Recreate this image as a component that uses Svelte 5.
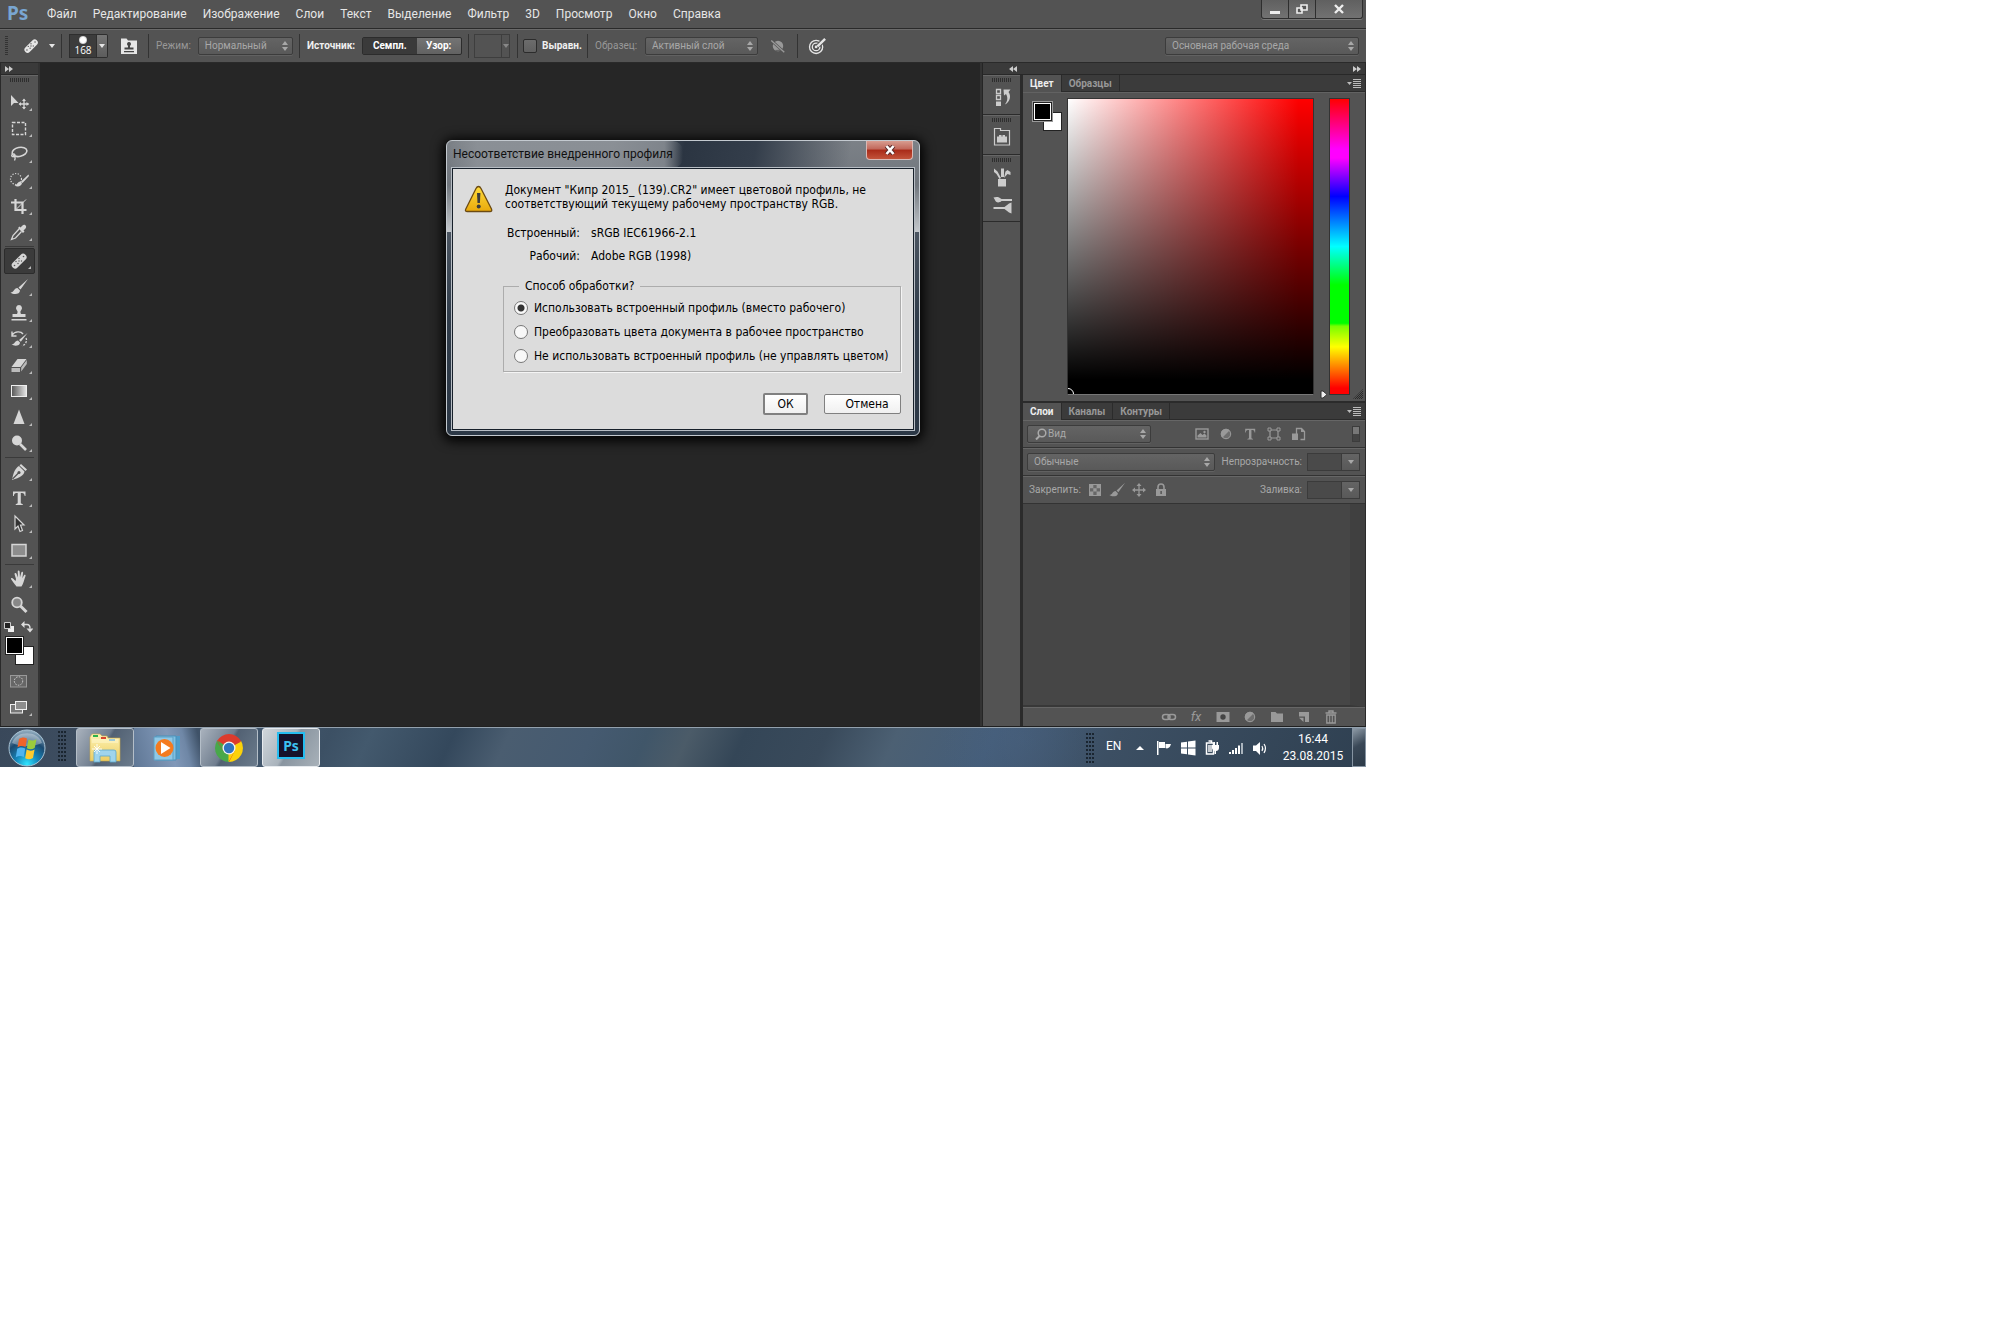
<script lang="ts">
  let profile = $state("embedded");
  let aligned = $state(false);

  const menus = ["Файл", "Редактирование", "Изображение", "Слои", "Текст", "Выделение", "Фильтр", "3D", "Просмотр", "Окно", "Справка"];

  const policies = [
    { value: "embedded", label: "Использовать встроенный профиль (вместо рабочего)" },
    { value: "convert", label: "Преобразовать цвета документа в рабочее пространство" },
    { value: "discard", label: "Не использовать встроенный профиль (не управлять цветом)" },
  ];

  // 20x20 glyphs, painted with currentColor
  const icons: Record<string, string> = {
    move: `<path d="M2 3v11l3-3h4.500z" fill="currentColor"/><path d="M15 7.500v9M10.500 12h9" stroke="currentColor" stroke-width="1.300"/><path d="M15 6.500l2 2.500h-4zM15 17.500l2-2.500h-4zM9.500 12l2.500-2v4zM20 12l-2.500-2v4z" fill="currentColor"/>`,
    marquee: `<rect x="3.500" y="4.500" width="13" height="12" fill="none" stroke="currentColor" stroke-width="1.400" stroke-dasharray="3 1.500"/>`,
    lasso: `<ellipse cx="10.500" cy="8" rx="7.500" ry="4.500" fill="none" stroke="currentColor" stroke-width="1.600" transform="rotate(-12 10 8)"/><path d="M4 10c-2.500 1-1 3.500 1 2.500s.5-3-1-2.500M5.500 12.500c1 1 .5 3 0 4" fill="none" stroke="currentColor" stroke-width="1.300"/>`,
    quick: `<circle cx="7" cy="9" r="5.500" fill="none" stroke="currentColor" stroke-width="1.200" stroke-dasharray="1.200 1.500"/><path d="M19.500 4.500l-7.500 7 1.500 1.500 6.500-7zM11.500 11.500c-3 0-3 3.500-6 4 3 2 7 1 7.500-2.500z" fill="currentColor"/>`,
    crop: `<path d="M6.500 3v11h11M2 6.500h11.500V18" fill="none" stroke="currentColor" stroke-width="2.200"/><path d="M7 13.500L17 3.500" stroke="currentColor" stroke-width="1"/>`,
    dropper: `<path d="M13.500 3.500c2-2 5 1 3 3l-2 2 1 1-1.500 1.500-5-5L10.500 4.500l1 1z" fill="currentColor"/><path d="M10 7l-6 6.500-1.500 4 4-1.500 6-6.500" fill="none" stroke="currentColor" stroke-width="1.300"/>`,
    heal: `<rect x="1" y="6.800" width="18" height="6.800" rx="3.300" fill="currentColor" transform="rotate(-45 10 10)"/><g fill="#555"><circle cx="7" cy="10.500" r=".7"/><circle cx="9" cy="12.500" r=".7"/><circle cx="10" cy="10" r=".7"/><circle cx="10" cy="7.500" r=".7"/><circle cx="12.500" cy="10" r=".7"/><circle cx="14.500" cy="5.500" r=".8"/><circle cx="5.500" cy="14.500" r=".8"/></g>`,
    brush: `<path d="M19 2L9.500 10.500l2 2zM8.500 11c-4 .5-3 4-7 4.500 3 2.500 9.500 2 9.500-2z" fill="currentColor"/>`,
    stamp: `<path d="M10 2a3.200 3.200 0 0 0-2 5.500c1 1 .5 2.500 0 3.500H3.500v3h13v-3H12c-.5-1-1-2.500 0-3.500A3.200 3.200 0 0 0 10 2zM2.500 16h15v1.500h-15z" fill="currentColor"/>`,
    history: `<path d="M3 6c3-4 9-4 11-1M3 2.500V7h4.500" fill="none" stroke="currentColor" stroke-width="1.400"/><path d="M18.500 4L10 11l1.800 1.800zM9 11.500c-3.500.5-3 3.500-6.500 4 3 2 8.500 1.500 8.500-2z" fill="currentColor"/><path d="M17 9c1.500 3-.5 7-4 8" fill="none" stroke="currentColor" stroke-width="1.300" stroke-dasharray="2 1.300"/>`,
    eraser: `<path d="M8.500 4h9l-6 8h-9z" fill="currentColor"/><path d="M2.500 13h8.500v4H2.500zM12.200 12.600l5.600-7.600v4l-5.600 7.600z" fill="currentColor" opacity=".8"/>`,
    gradient: `<rect x="2.500" y="4.500" width="15" height="11" fill="url(#g-grey)" stroke="#eee"/>`,
    sharpen: `<path d="M10 2.500L15.500 17h-11z" fill="currentColor"/>`,
    dodge: `<circle cx="8" cy="7.500" r="5" fill="currentColor"/><path d="M11 11l6 6" stroke="currentColor" stroke-width="2.600"/>`,
    pen: `<path d="M12 2l6 5.500-1.500 1.500-6-5.500zM10 4l5.500 5.500c-1 4-4 6-12.500 8.500C4.500 10 6.500 6 10 4z" fill="currentColor"/><path d="M3.500 17l6-6" stroke="#535353" stroke-width="1.200"/><circle cx="10" cy="10.500" r="1.500" fill="#535353"/>`,
    type: `<path d="M4 3.500h12.500V8h-.8c-.3-2-1-3-2.700-3h-1.200v10.300l2 .9v.8H6.700v-.8l2-.9V5H7.500C5.800 5 5.100 6 4.800 8H4z" fill="currentColor"/>`,
    path: `<path d="M6 2v13l3-3 2 5.500 2.500-1L11.500 11H15z" fill="#333" stroke="currentColor" stroke-width="1.200"/>`,
    rect: `<rect x="3" y="4.500" width="14" height="11.500" fill="#8d8d8d" stroke="currentColor" stroke-width="1.500"/>`,
    hand: `<path d="M7 10L5.500 5c0-1.200 1.500-1.500 2-.3L9 8.500l-.3-6c.1-1.300 1.700-1.300 1.900 0l.4 5.800 1.300-4.800c.4-1.200 1.900-.8 1.800.4l-.8 5.300 1.700-3c.7-1 1.900-.3 1.500.8-1.500 4-2 8-4 10.500H7.500C5.500 15 3.500 12.500 2 10c-.3-1.200 1.300-1.500 2-.6L6.500 12z" fill="currentColor"/>`,
    zoom: `<circle cx="8" cy="7.500" r="4.800" fill="#888" stroke="currentColor" stroke-width="1.800"/><path d="M11.500 11l6 6" stroke="currentColor" stroke-width="3"/>`,
    mask: `<rect x="1.500" y="4.500" width="16" height="11.500" fill="#666" stroke="#999"/><circle cx="9.500" cy="10" r="4.200" fill="none" stroke="currentColor" stroke-dasharray="1.500 1.300"/>`,
    screens: `<rect x="1.500" y="7.500" width="12" height="8.500" fill="#777" stroke="#eee"/><rect x="6.500" y="4.500" width="11" height="8" fill="#8c8c8c" stroke="#eee"/>`,
    actions: `<path d="M4.500 2.500h4v4h-4zM4.500 8.500h4v4h-4z" fill="none" stroke="currentColor" stroke-width="1.300"/><path d="M4 14.500h5V19H4zM11.500 2.500h7l-2 2.500c3 4 1.500 10-3.500 12.500 2-3 3.500-6 1-10.500L12 8.500z" fill="currentColor"/>`,
    library: `<path d="M2.500 18V1.500h6v2h9V18z" fill="none" stroke="currentColor" stroke-width="1.200"/><path d="M5 15.500V9.500h2v-1.500h2.500v1.500h1V8H13v1.500h2v6z" fill="currentColor"/>`,
    presets: `<path d="M6 12h8v7.500H6zM7.500 12L4.500 7 2 5V1.500l3.500 3L9 11zM9 10V1.500h3V10zM12 11l1.500-6.500 2-1.500L18.500 5v3L15.500 7z" fill="currentColor"/>`,
    brushes: `<path d="M1.500 2.500C4 1.500 7 1.500 9.500 4H20v2H9.500C7 8.500 3.500 7.500 3 5zM1.500 12h11L17 8.500l2.500-1v11L17 17.500l-4.500-3.500h-11z" fill="currentColor"/>`,
    source: `<path d="M2 18V2.500h5.500l1.500 2h9V18z" fill="currentColor"/><path d="M10 6a2 2 0 0 0-1.300 3.500c.5.700.3 1.500.2 2H5.500v2h9v-2h-3.400c-.1-.5-.3-1.300.2-2A2 2 0 0 0 10 6zM5 15h10v1.200H5z" fill="#444"/>`,
    noadjust: `<circle cx="10" cy="10" r="5.800" fill="currentColor"/><path d="M6 14.500A6 6 0 0 0 14.500 14z" fill="#666"/><path d="M2.500 4L17 17" stroke="#535353" stroke-width="3"/><path d="M2.500 4L17 17" stroke="currentColor" stroke-width="1.500"/>`,
    target: `<circle cx="9" cy="11" r="7.300" fill="none" stroke="currentColor" stroke-width="1.500"/><circle cx="9" cy="11" r="4.200" fill="none" stroke="currentColor" stroke-width="1.500"/><circle cx="9" cy="11" r="1.500" fill="currentColor"/><path d="M19.500 1.500l-8 8" stroke="#535353" stroke-width="5"/><path d="M19 2l-8.500 8.500" stroke="currentColor" stroke-width="2.600"/>`,
    picture: `<rect x="4" y="5" width="12" height="10" fill="none" stroke="currentColor" stroke-width="1.400"/><path d="M5.500 13.500v-2l3-2.500 2 2 2-1.500 2 2v2z" fill="currentColor"/><circle cx="12.500" cy="8" r="1.200" fill="currentColor"/>`,
    adjust: `<circle cx="10" cy="10" r="5.200" fill="#6e6e6e"/><path d="M13.700 6.300A5.200 5.200 0 1 0 6.300 13.700z" fill="currentColor"/><circle cx="10" cy="10" r="4.700" fill="none" stroke="currentColor" stroke-width="1"/>`,
    shape: `<path d="M6 6h8v8H6z" fill="none" stroke="currentColor" stroke-width="1.200"/><path d="M4 4h3v3H4zM13 4h3v3h-3zM4 13h3v3H4zM13 13h3v3h-3z" fill="#535353" stroke="currentColor"/>`,
    smart: `<path d="M8.500 13.500V4.500h5l3 3v8h-4" fill="none" stroke="currentColor" stroke-width="1.300"/><path d="M4 9.500h6v6.500H4zM13 4v4h4z" fill="currentColor"/>`,
    checker: `<rect x="4.500" y="4.500" width="11" height="11" fill="#666" stroke="currentColor"/><path d="M5 5h3.300v3.300H5zM11.600 5H15v3.300h-3.400zM8.300 8.300h3.300v3.300H8.300zM5 11.600h3.300V15H5zM11.600 11.600H15V15h-3.400z" fill="currentColor"/>`,
    cross: `<path d="M10 5v10M5 10h10" stroke="currentColor" stroke-width="1.300"/><path d="M10 3l2.500 3h-5zM10 17l2.500-3h-5zM3 10l3-2.500v5zM17 10l-3-2.500v5z" fill="currentColor"/>`,
    lock: `<path d="M7 9V7a3 3 0 0 1 6 0v2" fill="none" stroke="currentColor" stroke-width="1.600"/><path d="M5 9h10v7H5z" fill="currentColor"/><path d="M9.500 11h1.200v3H9.500z" fill="#444"/>`,
    link: `<rect x="3.500" y="7.500" width="7.500" height="5" rx="2.500" fill="none" stroke="currentColor" stroke-width="1.500"/><rect x="9" y="7.500" width="7.500" height="5" rx="2.500" fill="none" stroke="currentColor" stroke-width="1.500"/>`,
    addmask: `<path d="M3.500 5h13v10h-13z" fill="currentColor"/><circle cx="10" cy="10" r="2.700" fill="#444"/>`,
    folder: `<path d="M4 15V5h4.500l1.500 1.500h6V15z" fill="currentColor"/>`,
    newlayer: `<path d="M5 5h10v10h-4V9.500H5zM5 10.800h4.500V15z" fill="currentColor"/>`,
    trash: `<path d="M4.500 6h11M8 5.500V4h4v1.500" fill="none" stroke="currentColor" stroke-width="1.400"/><path d="M5.800 8h8.400v8H5.800z" fill="none" stroke="currentColor" stroke-width="1.300"/><path d="M8.700 8v8M11.300 8v8" stroke="currentColor"/>`,
  };

  const toolGroups = [
    ["move", "marquee", "lasso", "quick", "crop", "dropper"],
    ["heal", "brush", "stamp", "history", "eraser", "gradient", "sharpen", "dodge"],
    ["pen", "type", "path", "rect"],
    ["hand", "zoom"],
  ];
  const filters = ["picture", "adjust", "type", "shape", "smart"];
  const locks = ["checker", "brush", "cross", "lock"];
</script>

{#snippet icon(name: string, size = 20)}
  <svg viewBox="0 0 20 20" width={size} height={size} aria-hidden="true">{@html icons[name]}</svg>
{/snippet}

{#snippet updown()}
  <svg class="updown" viewBox="0 0 6 10" width="6" height="10" aria-hidden="true"><path d="M0 4l3-4 3 4zM0 6l3 4 3-4z" fill="currentColor" /></svg>
{/snippet}

{#snippet down()}
  <svg viewBox="0 0 6 4" width="6" height="4" aria-hidden="true"><path d="M0 0h6L3 4z" fill="currentColor" /></svg>
{/snippet}

{#snippet chevrons(left = false)}
  <svg class:flip={left} viewBox="0 0 8 6" width="8" height="6" aria-hidden="true"><path d="M0 0l4 3-4 3zM4 0l4 3-4 3z" fill="#ccc" /></svg>
{/snippet}

{#snippet panelMenu()}
  <button class="panel-menu" aria-label="Меню панели">
    <svg viewBox="0 0 14 9" width="14" height="9"><path d="M0 3h5L2.500 6z" fill="#bbb" /><path d="M6 0h8v1H6zM6 2h8v1H6zM6 4h8v1H6zM6 6h8v1H6zM6 8h8v1H6z" fill="#bbb" /></svg>
  </button>
{/snippet}

<svg class="defs" width="0" height="0" aria-hidden="true">
  <defs>
    <linearGradient id="g-grey"><stop offset="0" stop-color="#555" /><stop offset="1" stop-color="#e8e8e8" /></linearGradient>
    <radialGradient id="g-orb" cx=".5" cy=".95" r=".9"><stop offset="0" stop-color="#2fe6ff" /><stop offset=".35" stop-color="#1687bb" /><stop offset=".7" stop-color="#1c4a70" /><stop offset="1" stop-color="#8aa6ba" /></radialGradient>
    <linearGradient id="g-folder" x2="0" y2="1"><stop offset="0" stop-color="#fdf3b5" /><stop offset="1" stop-color="#eccd62" /></linearGradient>
    <linearGradient id="g-warn" x2="0" y2="1"><stop offset="0" stop-color="#ffdc3c" /><stop offset="1" stop-color="#e9a90c" /></linearGradient>
  </defs>
</svg>

<div class="screen">
  <header class="menubar">
    <span class="logo">Ps</span>
    <nav>
      {#each menus as item}
        <button>{item}</button>
      {/each}
    </nav>
    <div class="window-buttons">
      <button aria-label="Свернуть"><svg viewBox="0 0 12 10" width="12" height="10"><path d="M1 7h10v3H1z" fill="#eee" /></svg></button>
      <button aria-label="Развернуть"><svg viewBox="0 0 12 10" width="12" height="10"><path d="M5 1h6v5H5zM1 4h5v5H1z" fill="#555" stroke="#eee" stroke-width="1.600" /></svg></button>
      <button class="wide" aria-label="Закрыть"><svg viewBox="0 0 12 10" width="12" height="10"><path d="M2 1l8 8M10 1L2 9" stroke="#eee" stroke-width="2.400" /></svg></button>
    </div>
  </header>

  <div class="options">
    <div class="group brush-tool">
      <span class="ridge"></span>
      <button class="current" aria-label="Восстанавливающая кисть">{@render icon("heal", 18)}{@render down()}</button>
    </div>
    <div class="group size-tool">
      <button class="size"><span class="tip"></span><span>168</span></button>
      <button class="drop" aria-label="Параметры кисти">{@render down()}</button>
      <button class="source" aria-label="Источник клонов">{@render icon("source")}</button>
    </div>
    <div class="group">
      <label class="dim" for="mode">Режим:</label>
      <span class="select grow">
        <select id="mode"><option>Нормальный</option></select>
        {@render updown()}
      </span>
    </div>
    <div class="group">
      <span class="bright source-label">Источник:</span>
      <div class="segmented">
        <button class="on">Семпл.</button>
        <button>Узор:</button>
      </div>
    </div>
    <div class="group pattern">
      <button aria-label="Узор"><span></span>{@render down()}</button>
    </div>
    <div class="group">
      <label class="bright check"><input type="checkbox" bind:checked={aligned} />Выравн.</label>
    </div>
    <div class="group">
      <label class="dim sample-label" for="sample">Образец:</label>
      <span class="select sample">
        <select id="sample"><option>Активный слой</option></select>
        {@render updown()}
      </span>
      <button class="faint" aria-label="Без корректирующих слоев">{@render icon("noadjust", 18)}</button>
    </div>
    <div class="group last">
      <button aria-label="Нажим пера">{@render icon("target", 18)}</button>
    </div>
    <span class="select workspace-select">
      <select aria-label="Рабочая среда"><option>Основная рабочая среда</option></select>
      {@render updown()}
    </span>
  </div>

  <main class="workspace">
    <aside class="tools">
      <div class="strip">{@render chevrons()}</div>
      <div class="grip-row"><span class="grip"></span></div>
      {#each toolGroups as group, i}
        {#if i > 0}<hr />{/if}
        {#each group as tool}
          <button class="tool" class:active={tool === "heal"} class:plain={tool === "zoom"} aria-label={tool}>{@render icon(tool)}</button>
        {/each}
      {/each}
      <div class="mini">
        <svg viewBox="0 0 12 12" width="12" height="12"><path d="M5 5h6v6H5z" fill="#eee" /><path d="M1.500 1.500h6v6h-6z" fill="#222" stroke="#ccc" /></svg>
        <svg viewBox="0 0 12 12" width="12" height="12"><path d="M3 3.500h3c2 0 3 1 3 4" fill="none" stroke="#ddd" stroke-width="1.500" /><path d="M0 3.500L3.500 0v7zM5.500 7.500h7L9 11.500z" fill="#ddd" /></svg>
      </div>
      <div class="swatches"><span class="bg"></span><span class="fg"></span></div>
      <button class="tool plain" aria-label="Быстрая маска">{@render icon("mask")}</button>
      <button class="tool" aria-label="Режим экрана">{@render icon("screens")}</button>
    </aside>

    <div class="canvas"></div>

    <div class="docks">
      <div class="strip dock-strip">
        <span>{@render chevrons(true)}</span>
        <span>{@render chevrons()}</span>
      </div>
      <aside class="icon-dock">
        <div class="dock-group"><span class="grip"></span><button aria-label="История">{@render icon("actions")}</button></div>
        <div class="dock-group"><span class="grip"></span><button aria-label="Библиотеки">{@render icon("library")}</button></div>
        <div class="dock-group"><span class="grip"></span><button aria-label="Наборы кистей">{@render icon("presets")}</button><button aria-label="Кисть">{@render icon("brushes")}</button></div>
      </aside>

      <div class="panels">
        <section class="color-panel">
          <div class="tabs">
            <button class="on">Цвет</button>
            <button>Образцы</button>
            {@render panelMenu()}
          </div>
          <div class="color-body">
            <div class="swatches ringed"><span class="bg"></span><span class="fg"></span></div>
            <div class="field"><span class="marker"></span></div>
            <div class="hue">
              <svg class="pointer" viewBox="0 0 8 9" width="8" height="9"><path d="M1 1h2l4 3.500L3 8H1z" fill="#eee" stroke="#333" /></svg>
            </div>
            <span class="resize"></span>
          </div>
        </section>

        <section class="layers-panel">
          <div class="tabs">
            <button class="on">Слои</button>
            <button>Каналы</button>
            <button>Контуры</button>
            {@render panelMenu()}
          </div>
          <div class="row">
            <span class="select kind">
              <svg class="lens" viewBox="0 0 12 12" width="12" height="12"><circle cx="7" cy="5" r="3.800" fill="none" stroke="#aaa" stroke-width="1.500" /><path d="M4.500 8L1 11.500" stroke="#aaa" stroke-width="2" /></svg>
              <select aria-label="Фильтр слоев"><option>Вид</option></select>
              {@render updown()}
            </span>
            <div class="filters">
              {#each filters as name}
                <button aria-label={name}>{@render icon(name, name === "type" ? 16 : 20)}</button>
              {/each}
            </div>
            <span class="toggle"></span>
          </div>
          <div class="row">
            <span class="select blend">
              <select aria-label="Режим наложения"><option>Обычные</option></select>
              {@render updown()}
            </span>
            <label for="opacity">Непрозрачность:</label>
            <span class="combo"><input id="opacity" type="text" /><button aria-label="Изменить">{@render down()}</button></span>
          </div>
          <div class="row">
            <span class="lock-label">Закрепить:</span>
            <div class="locks">
              {#each locks as name}
                <button aria-label={name}>{@render icon(name, name === "brush" ? 18 : 20)}</button>
              {/each}
            </div>
            <label class="fill" for="fill">Заливка:</label>
            <span class="combo"><input id="fill" type="text" /><button aria-label="Изменить">{@render down()}</button></span>
          </div>
          <div class="list"></div>
          <footer>
            <button aria-label="Связать">{@render icon("link")}</button>
            <button class="fx">fx</button>
            {#each ["addmask", "adjust", "folder", "newlayer", "trash"] as name}
              <button aria-label={name}>{@render icon(name)}</button>
            {/each}
          </footer>
        </section>
      </div>
    </div>
  </main>

  <footer class="taskbar">
    <button class="start" aria-label="Пуск">
      <svg viewBox="0 0 38 38" width="38" height="38">
        <circle cx="19" cy="19" r="18" fill="url(#g-orb)" stroke="#a9c3d4" stroke-width="1" />
        <path d="M4 14C8 1 30 1 34 14c-8 4-22 4-30 0z" fill="#fff" opacity=".35" />
        <path d="M11 10c3-2 5-2 8-.5L17.500 18c-3-1.500-5-1.500-8 .2z" fill="#f0642a" />
        <path d="M20.500 10.500c3 1.500 5 1.300 8-.3L26.700 19c-3 1.600-5 1.600-7.800.2z" fill="#9bcb3c" />
        <path d="M9.200 19.700c3-1.700 5-1.600 8-.2L15.800 28c-3-1.500-5-1.400-8 .2z" fill="#4fb4f0" />
        <path d="M18.600 20.600c3 1.500 5 1.400 8-.2L25 29c-3 1.600-5 1.500-7.800.2z" fill="#ffcb2e" />
      </svg>
    </button>
    <span class="dots"></span>
    <button class="task open" aria-label="Проводник">
      <svg viewBox="0 0 34 32" width="34" height="32">
        <path d="M2 5l2-3h8l2 2h5l1 2h12v23H2z" fill="url(#g-folder)" stroke="#c9a84a" stroke-width=".6" />
        <path d="M5 3h5v2H5z" fill="#2cb34a" /><path d="M13 5h5v2h-5z" fill="#d8452f" /><path d="M21 7h6v2h-6z" fill="#3d9be0" />
        <path d="M4 8h26M4 10h26" stroke="#fff8d0" stroke-width="1" />
        <path d="M6 30V20q0-2 2-2h18q2 0 2 2v10h-6v-6H12v6z" fill="#9fd4ec" stroke="#5aa7cc" stroke-width=".8" />
        <path d="M9 12v10M4 17h10M6 14l6 6M12 14l-6 6" stroke="#fff" stroke-width=".9" />
      </svg>
    </button>
    <button class="task player" aria-label="Проигрыватель">
      <svg viewBox="0 0 30 28" width="30" height="28">
        <path d="M6 2h22v23H6z" fill="#4f9cc9" /><path d="M4 2h20v24H4z" fill="#7fc0e2" stroke="#4a90b8" /><path d="M2 3h19v23H2z" fill="#8fc8e6" stroke="#5d9fc4" />
        <circle cx="12.500" cy="14" r="9" fill="#f47b20" /><path d="M9 8l9.500 6L9 20z" fill="#fff" />
      </svg>
    </button>
    <button class="task open" aria-label="Chrome">
      <svg viewBox="0 0 28 28" width="28" height="28">
        <path d="M14 14L1.900 7A14 14 0 0 1 26.100 7z" fill="#dd3b2d" />
        <path d="M14 14l12.100-7A14 14 0 0 1 14 28z" fill="#fcd20a" />
        <path d="M14 14v14A14 14 0 0 1 1.900 7z" fill="#48a84a" />
        <path d="M14 7.500h12.400L14 14zM8.400 17.200L1.900 7 14 14zM19.600 17.200L14 28V14z" fill="#dd3b2d" />
        <path d="M8.400 17.200L2.200 6.500 14 14z" fill="#48a84a" /><path d="M19.600 17.200L13.500 28V14z" fill="#fcd20a" />
        <circle cx="14" cy="14" r="6.500" fill="#f4f4f4" /><circle cx="14" cy="14" r="5.200" fill="#2f74c0" />
      </svg>
    </button>
    <button class="task open focused"><span class="ps-tile">Ps</span></button>

    <div class="tray">
      <span class="dots"></span>
      <span class="lang">EN</span>
      <svg viewBox="0 0 8 4" width="8" height="4"><path d="M0 4l4-4 4 4z" fill="#fff" /></svg>
      <div class="tray-icons">
        <svg viewBox="0 0 16 16" width="16" height="16"><path d="M1 1h1.500v14H1zM3 2h6v6H3zM9.500 4H15l-1 2.500c-1 1.500-3 2.500-4.500 1.500z" fill="#fff" /></svg>
        <svg viewBox="0 0 16 16" width="16" height="16"><path d="M1 2.500l6-.8v5.800H1zM8 1.500L15.500 .5v7H8zM1 8.500h6v5.800l-6-.8zM8 8.500h7.500v7L8 14.500z" fill="#fff" /></svg>
        <svg viewBox="0 0 16 16" width="16" height="16"><path d="M2.500 3h7v11h-7zM4.500 1h3v2" fill="none" stroke="#fff" stroke-width="1.500" /><path d="M4 5h4v7H4z" fill="#fff" opacity=".7" /><path d="M8 5h1.500V2H11v3h1.500V2H14v3h1v3c0 2-1.500 3-3 3v3h-1.500v-3C9 10 8 9 8 8z" fill="#fff" /></svg>
        <svg viewBox="0 0 16 16" width="16" height="16"><path d="M1 12h2v2H1zM4 10h2v4H4zM7 8h2v6H7zM10 5.500h2V14h-2z" fill="#fff" /><path d="M13 3h2v11h-2z" fill="#aab4bd" /></svg>
        <svg viewBox="0 0 16 16" width="16" height="16"><path d="M1 5.500h3L8 2v13l-4-4H1z" fill="#fff" /><path d="M10 6q1.500 2.500 0 5M12 4q3 4 0 9" fill="none" stroke="#fff" stroke-width="1.200" /></svg>
      </div>
      <div class="clock"><span>16:44</span><span>23.08.2015</span></div>
      <button class="peek" aria-label="Свернуть все окна"></button>
    </div>
  </footer>

  <div class="dialog" role="dialog" aria-labelledby="dialog-title">
    <div class="titlebar">
      <h2 id="dialog-title">Несоответствие внедренного профиля</h2>
      <button class="close" aria-label="Закрыть"><svg viewBox="0 0 12 10" width="12" height="10"><path d="M2.500 1l7 8M9.500 1l-7 8" stroke="#5a2a2a" stroke-width="4.500" /><path d="M2.500 1l7 8M9.500 1l-7 8" stroke="#fff" stroke-width="2.600" /></svg></button>
    </div>
    <form class="dialog-body" onsubmit={(e) => e.preventDefault()}>
      <svg class="warning" viewBox="0 0 30 28" width="30" height="28">
        <path d="M14.500 1.500q1.500 0 2.500 2L27.500 24q1 2.500-1.500 2.500H3.500Q.5 26.500 1.800 24L12 3.500q1-2 2.500-2z" fill="url(#g-warn)" stroke="#6b4a12" stroke-width="1.300" />
        <path d="M13 8h3.400l-.5 10h-2.400z" fill="#3c3c3c" /><circle cx="14.700" cy="21.500" r="2" fill="#3c3c3c" />
      </svg>
      <div class="content">
        <p>Документ "Кипр 2015_ (139).CR2" имеет цветовой профиль, не<br />соответствующий текущему рабочему пространству RGB.</p>
        <dl>
          <dt>Встроенный:</dt><dd>sRGB IEC61966-2.1</dd>
          <dt>Рабочий:</dt><dd>Adobe RGB (1998)</dd>
        </dl>
        <fieldset>
          <legend>Способ обработки?</legend>
          {#each policies as policy}
            <label><input type="radio" name="policy" value={policy.value} bind:group={profile} />{policy.label}</label>
          {/each}
        </fieldset>
        <div class="actions">
          <button class="ok">ОК</button>
          <button type="button" class="cancel">Отмена</button>
        </div>
      </div>
    </form>
  </div>
</div>

<style>
  :global(body) {
    background: #fff;
  }

  .screen {
    position: relative;
    width: 68.3%;
    color: #e6e6e6;
    background: #535353;
    font-family: Roboto, "Noto Sans", sans-serif;
    font-size: 10px;
    line-height: 14px;
  }

  .screen :global(svg) {
    display: block;
    flex: none;
  }

  .defs {
    position: absolute;
  }

  button {
    display: flex;
    align-items: center;
    justify-content: center;
    padding: 0;
    border: none;
    background: none;
    color: inherit;
    font: inherit;
  }

  .flip {
    transform: scaleX(-1);
  }

  /* menu bar */
  .menubar {
    display: flex;
    height: 28px;
    border-bottom: 1px solid #2a2a2a;
  }

  .logo {
    width: 47px;
    padding-left: 7px;
    box-sizing: border-box;
    color: #79a6d2;
    font-family: "Noto Sans", sans-serif;
    font-size: 19px;
    font-weight: 700;
    line-height: 26px;
  }

  nav {
    display: flex;
    flex: 1;
    gap: 16px;
    font-size: 12px;
  }

  .window-buttons {
    display: flex;
    align-self: flex-start;
    height: 18px;
    margin-right: 3px;
    border: 1px solid #2e2e2e;
    border-top: none;
    border-radius: 0 0 3px 3px;
    background: linear-gradient(#606060, #727272);
    box-shadow: 0 1px #777;
  }

  .window-buttons button {
    width: 27px;
    border-right: 1px solid #2e2e2e;
  }

  .window-buttons .wide {
    width: 46px;
    border-right: none;
  }

  /* options bar */
  .options {
    display: grid;
    grid-template-columns: 62px 87px 151px 169px 49px 70px 210px 1fr 194px;
    align-items: center;
    height: 31px;
    padding: 0 7px 1px 0;
    border-top: 1px solid #6a6a6a;
  }

  .group {
    display: flex;
    align-items: center;
    height: 24px;
    padding-left: 7px;
    padding-right: 6px;
    border-right: 1px solid #333;
    gap: 7px;
    white-space: nowrap;
  }

  .group.last {
    padding-left: 10px;
    border-right: none;
  }

  .brush-tool {
    gap: 14px;
    padding-left: 5px;
  }

  .current {
    gap: 9px;
  }

  .ridge {
    width: 3px;
    height: 20px;
    background: repeating-linear-gradient(#333 0 1px, transparent 1px 2px);
  }

  .size-tool {
    gap: 0;
  }

  .size {
    flex-direction: column;
    width: 28px;
    height: 24px;
    border: 1px solid #2e2e2e;
    background: #3c3c3c;
    box-sizing: border-box;
    color: #fff;
    font-family: "Open Sans", sans-serif;
    line-height: 12px;
  }

  .tip {
    width: 8px;
    height: 8px;
    border-radius: 50%;
    background: radial-gradient(#fff 45%, #777 100%);
  }

  .drop {
    width: 11px;
    height: 24px;
    border: 1px solid #2e2e2e;
    border-left: none;
    border-radius: 0 2px 2px 0;
    box-sizing: border-box;
    background: linear-gradient(#757575, #5c5c5c);
  }

  .source {
    margin-left: 11px;
  }

  .dim {
    min-width: 33px;
    color: #989898;
  }

  .sample-label {
    min-width: 43px;
  }

  .bright {
    color: #f0f0f0;
    font-weight: 700;
  }

  .source-label {
    min-width: 48px;
  }

  .select {
    position: relative;
    display: block;
    height: 18px;
    color: #a8a8a8;
  }

  .grow {
    flex: 1;
  }

  .sample {
    width: 113px;
  }

  select {
    width: 100%;
    height: 18px;
    padding: 0 0 0 6px;
    border: 1px solid #3c3c3c;
    border-radius: 2px;
    box-sizing: border-box;
    appearance: none;
    background: linear-gradient(#646464, #595959);
    color: inherit;
    font: inherit;
    box-shadow: 0 1px #616161;
  }

  .updown {
    position: absolute;
    right: 5px;
    top: 4px;
    color: #a8a8a8;
  }

  .segmented {
    display: flex;
    flex: 1;
    height: 16px;
    border: 1px solid #2c2c2c;
    border-radius: 2px;
    background: linear-gradient(#747474, #626262);
    font-weight: 700;
    color: #fff;
  }

  .segmented button {
    flex: 5;
  }

  .segmented .on {
    flex: 6;
    background: #3a3a3a;
  }

  .pattern {
    padding-left: 5px;
  }

  .pattern button {
    height: 24px;
    border: 1px solid #3e3e3e;
    color: #888;
  }

  .pattern span {
    width: 26px;
    height: 22px;
    border-right: 1px solid #3e3e3e;
    margin-right: 1px;
  }

  .check {
    display: flex;
    align-items: center;
    gap: 5px;
    margin-left: -2px;
  }

  .check input {
    width: 14px;
    height: 14px;
    margin: 0;
    border: 1px solid #2c2c2c;
    border-radius: 2px;
    box-sizing: border-box;
    appearance: none;
    background: linear-gradient(#6c6c6c, #606060);
  }

  .faint {
    margin-left: 4px;
    color: #999;
  }

  /* workspace */
  .workspace {
    display: grid;
    grid-template-columns: 38px 1fr 384px;
    border-top: 1px solid #2a2a2a;
    border-bottom: 1px solid #202020;
  }

  .strip {
    display: flex;
    align-items: center;
    height: 11px;
    padding: 0 4px;
    border-bottom: 1px solid #282828;
    background: #3a3a3a;
  }

  .tools {
    border-left: 1px solid #2a2a2a;
    background: #535353;
    padding-bottom: 6px;
  }

  .grip-row {
    height: 14px;
    padding: 2px 0 0 9px;
    box-sizing: border-box;
    border-top: 1px solid #666;
  }

  .grip {
    display: block;
    width: 20px;
    height: 4px;
    background: repeating-linear-gradient(90deg, #2e2e2e 0 1px, transparent 1px 2px);
  }

  .tools hr {
    height: 1px;
    margin: 1px 4px;
    border: none;
    background: #3a3a3a;
  }

  .tool {
    position: relative;
    width: 31px;
    height: 26px;
    margin-left: 3px;
    padding-right: 2px;
    color: #d6d6d6;
  }

  .tool.active {
    border: 1px solid #2c2c2c;
    border-radius: 2px;
    box-sizing: border-box;
    background: #3b3b3b;
  }

  .tool::after {
    content: "";
    position: absolute;
    right: 3px;
    bottom: 4px;
    border-left: 3px solid transparent;
    border-bottom: 3px solid #bbb;
  }

  .tool.plain::after {
    display: none;
  }

  .mini {
    display: flex;
    justify-content: space-between;
    height: 17px;
    align-items: center;
    padding: 0 5px 0 2px;
  }

  .swatches {
    position: relative;
    width: 29px;
    height: 33px;
    margin-left: 5px;
  }

  .swatches span {
    position: absolute;
    width: 17px;
    height: 17px;
    border: 1px solid #222;
  }

  .swatches .fg {
    left: 0;
    top: 2px;
    width: 15px;
    height: 15px;
    border: 1px solid #fff;
    outline: 1px solid #222;
    background: #000;
  }

  .swatches .bg {
    left: 9px;
    top: 11px;
    background: #fff;
  }

  .canvas {
    border-left: 2px solid #333;
    border-right: 2px solid #333;
    background: #262626;
  }

  .docks {
    display: grid;
    grid-template-columns: 37px 1fr;
    grid-template-rows: auto 1fr;
    column-gap: 3px;
    padding-right: 1px;
    border-left: 1px solid #252525;
    background: #2b2b2b;
  }

  .dock-strip {
    grid-column: 1 / -1;
    justify-content: space-between;
  }

  .dock-strip span:first-child {
    margin-left: 22px;
  }

  .icon-dock {
    background: #535353;
  }

  .dock-group {
    padding: 2px 0 4px 9px;
    border-top: 1px solid #666;
    border-bottom: 1px solid #2b2b2b;
    color: #ccc;
  }

  .dock-group button {
    height: 26px;
    margin-top: 2px;
  }

  .dock-group button + button {
    height: 25px;
  }

  .panels {
    display: flex;
    flex-direction: column;
    gap: 2px;
  }

  section {
    background: #535353;
  }

  .tabs {
    display: flex;
    height: 17px;
    background: #3b3b3b;
    box-shadow: inset 0 -1px #2b2b2b;
    color: #989898;
    font-weight: 700;
  }

  .tabs > button {
    padding: 0 7px;
    border-right: 1px solid #2b2b2b;
  }

  .tabs > .on {
    background: #535353;
    color: #eee;
  }

  .tabs > .panel-menu {
    margin-left: auto;
    padding: 0 4px;
    border: none;
  }

  .color-body {
    position: relative;
    display: flex;
    padding: 5px 15px 6px 8px;
    border-top: 1px solid #626262;
  }

  .color-body .swatches {
    width: 33px;
    margin: 3px 0 0 3px;
  }

  .ringed .fg {
    box-shadow: 0 0 0 2px #999;
  }

  .field {
    position: relative;
    flex: 1;
    height: 295px;
    margin-right: 15px;
    border: 1px solid #333;
    border-bottom-color: #777;
    overflow: hidden;
    background: linear-gradient(transparent, #000 95%), linear-gradient(90deg, #fff, #f00 94%);
  }

  .marker {
    position: absolute;
    left: -6px;
    bottom: -6px;
    width: 10px;
    height: 10px;
    border: 1px solid #fff;
    border-radius: 50%;
  }

  .hue {
    position: relative;
    width: 19px;
    border: 1px solid #333;
    background: linear-gradient(#f00, #f0f 17%, #f0f 20%, #00f 33%, #0ff 50%, #0f0 63%, #0f0 76%, #7f0 77%, #ff0 84%, #f00 98%);
  }

  .pointer {
    position: absolute;
    left: -10px;
    bottom: -5px;
  }

  .resize {
    position: absolute;
    right: 2px;
    bottom: 2px;
    width: 10px;
    height: 10px;
    background: repeating-conic-gradient(#2a2a2a 0 25%, transparent 0 50%) 0 0 / 2px 2px;
    clip-path: polygon(100% 0, 100% 100%, 0 100%);
  }

  .layers-panel {
    display: flex;
    flex: 1;
    flex-direction: column;
  }

  .row {
    display: flex;
    align-items: center;
    height: 26px;
    padding: 0 5px 0 4px;
    border-top: 1px solid #666;
    border-bottom: 1px solid #333;
    color: #a8a8a8;
    white-space: nowrap;
  }

  .kind {
    width: 124px;
  }

  .kind select {
    padding-left: 20px;
  }

  .lens {
    position: absolute;
    left: 8px;
    top: 3px;
  }

  .filters {
    display: flex;
    margin-left: 41px;
    gap: 4px;
  }

  .filters button,
  .locks button {
    width: 20px;
    color: #999;
  }

  .locks button {
    width: 22px;
  }

  .toggle {
    width: 8px;
    height: 16px;
    margin-left: auto;
    border: 1px solid #3c3c3c;
    background: linear-gradient(#777 50%, #444 50%);
    box-sizing: border-box;
  }

  .blend {
    flex: 1;
    margin-right: 7px;
  }

  .combo {
    display: flex;
    width: 53px;
    height: 18px;
    margin-left: 5px;
    border: 1px solid #3b3b3b;
    box-sizing: border-box;
  }

  .combo input {
    flex: 1;
    min-width: 0;
    padding: 0;
    border: none;
    background: #4a4a4a;
  }

  .combo button {
    width: 18px;
    border-left: 1px solid #3b3b3b;
    background: linear-gradient(#646464, #595959);
  }

  .lock-label {
    min-width: 52px;
    margin-left: 2px;
  }

  .locks {
    display: flex;
    margin-left: 3px;
  }

  .fill {
    margin-left: auto;
  }

  .list {
    flex: 1;
    border-right: 15px solid #404040;
    border-bottom: 2px solid #383838;
    background: #464646;
  }

  .layers-panel footer {
    display: flex;
    align-items: center;
    justify-content: flex-end;
    height: 18px;
    padding-right: 24px;
    border-top: 1px solid #666;
    gap: 7px;
    color: #999;
  }

  .layers-panel footer button {
    width: 20px;
  }

  .fx {
    font-size: 13px;
    font-style: italic;
  }

  /* taskbar */
  .taskbar {
    display: flex;
    height: 39px;
    border-top: 1px solid #93a1ae;
    background:
      radial-gradient(circle at 1020px 10px, #4d658555 0, transparent 80px),
      linear-gradient(115deg, #39485a 0, #3d4d60 6%, #495e76 14%, #3c5064 24%, #43596d 27%, #34485c 33%, #4a5d70 37%, #455a70 43%, #405669 47%, #4b5b68 50%, #344657 54%, #394a5b 60%, #4c6073 65%, #445d79 72%, #3c4f63 81%, #2f4051 100%);
  }

  .start {
    width: 54px;
  }

  .dots {
    width: 8px;
    height: 32px;
    margin: 3px 10px 0 4px;
    background:
      linear-gradient(90deg, #1a2530 2px, transparent 2px) 0 0 / 3px 4px,
      transparent;
    mask: repeating-linear-gradient(#000 0 2px, transparent 2px 4px);
  }

  .task {
    width: 58px;
    height: 39px;
    box-sizing: border-box;
  }

  .open {
    border: 1px solid #b4bec8;
    border-radius: 3px;
    background: linear-gradient(120deg, #a9b2bd, #707e8f 45%, #526173 50%, #6b7b8c);
  }

  .open.focused {
    margin-left: 4px;
    border-color: #e6eaee;
    background: linear-gradient(120deg, #d0d6db, #a9b3bc 45%, #8995a0 50%, #a8b1b9);
  }

  .player {
    width: 66px;
    background: linear-gradient(75deg, #5f7795, #8198b8 55%, #6f87a6 75%, #3f5268 95%);
  }

  .ps-tile {
    width: 24px;
    height: 23px;
    margin-bottom: 4px;
    border: 2px solid #26bdf0;
    background: #16122a;
    color: #3cc0f0;
    font-family: "Noto Sans", sans-serif;
    font-size: 14px;
    font-weight: 700;
    line-height: 23px;
  }

  .tray {
    display: flex;
    align-items: center;
    margin-left: auto;
    color: #fff;
    font-size: 12px;
  }

  .lang {
    width: 32px;
    padding-left: 2px;
    padding-bottom: 4px;
    box-sizing: border-box;
  }

  .tray-icons {
    display: flex;
    margin-left: 12px;
    margin-right: 6px;
    gap: 8px;
  }

  .clock {
    display: flex;
    flex-direction: column;
    align-items: center;
    width: 78px;
    line-height: 17px;
  }

  .peek {
    width: 14px;
    height: 39px;
    border: 1px solid #8694a2;
    box-sizing: border-box;
    background: linear-gradient(150deg, #8c99a5, #3a4857 45%, #2c3a48);
  }

  /* dialog */
  .dialog {
    position: absolute;
    top: 140px;
    left: 0;
    right: 0;
    width: 472px;
    margin: 0 auto;
    border: 1px solid #c3c9cf;
    border-radius: 6px;
    background:
      linear-gradient(100deg, transparent 35%, #2b3542 50%, #343e4b 65%, transparent 85%) 0 0 / 100% 28px no-repeat,
      linear-gradient(#7c8187 0, #70767d 15%, #c4c8cc 31%, #4b5561 31%, #303c4a 60%, #2c3846);
    box-shadow: 0 2px 12px 3px #000;
  }

  .titlebar {
    display: flex;
    justify-content: space-between;
    height: 27px;
    padding: 0 6px 0 2px;
  }

  h2 {
    margin: 0;
    padding: 0 10px 0 4px;
    border-radius: 10px;
    background: linear-gradient(90deg, transparent, #8e9399cc 12%, #8e9399cc 92%, transparent);
    color: #111;
    font-size: 12px;
    font-weight: 400;
    line-height: 26px;
  }

  .close {
    width: 47px;
    height: 19px;
    border: 1px solid #d9b8b4;
    border-top: none;
    border-radius: 0 0 4px 4px;
    box-sizing: border-box;
    background: linear-gradient(#d89c90, #c1675a 45%, #a92a18 50%, #c2533a);
  }

  .dialog-body {
    display: flex;
    align-items: flex-start;
    margin: 0 5px 5px;
    padding: 14px 12px 14px 11px;
    border: 1px solid #17202a;
    outline: 1px solid #b7bdc4;
    background: #dcdcdc;
    color: #000;
    font-family: "DejaVu Sans Condensed", "DejaVu Sans", sans-serif;
    font-size: 12px;
  }

  .warning {
    margin-top: 2px;
  }

  .content {
    flex: 1;
    margin-left: 9px;
    white-space: nowrap;
  }

  p {
    margin: 0 0 15px 2px;
  }

  dl {
    display: grid;
    grid-template-columns: 76px auto;
    gap: 9px 11px;
    margin: 0 0 16px 1px;
  }

  dt {
    text-align: right;
  }

  dd {
    margin: 0;
  }

  fieldset {
    display: flex;
    flex-direction: column;
    gap: 10px;
    margin: 0;
    padding: 8px 8px 8px 10px;
    border: 1px solid #acacac;
    box-shadow: 1px 1px #f4f4f4;
  }

  legend {
    margin-left: 5px;
    padding: 0 6px;
  }

  fieldset label {
    display: flex;
    align-items: center;
    gap: 6px;
  }

  input[type="radio"] {
    width: 14px;
    height: 14px;
    margin: 0;
    border: 1px solid #777;
    border-radius: 50%;
    box-sizing: border-box;
    appearance: none;
    background: #f8f8f8;
  }

  input[type="radio"]:checked {
    background: radial-gradient(#333 0 3px, #f8f8f8 4px);
  }

  .actions {
    display: flex;
    align-items: center;
    justify-content: flex-end;
    gap: 16px;
    margin-top: 21px;
  }

  .actions button {
    border: 1px solid #808080;
    border-radius: 2px;
    background: linear-gradient(#fff, #f0f0f0);
    box-sizing: border-box;
  }

  .actions .ok {
    width: 45px;
    height: 22px;
    border-width: 2px;
  }

  .actions .cancel {
    width: 77px;
    height: 20px;
    padding-left: 9px;
  }
</style>
